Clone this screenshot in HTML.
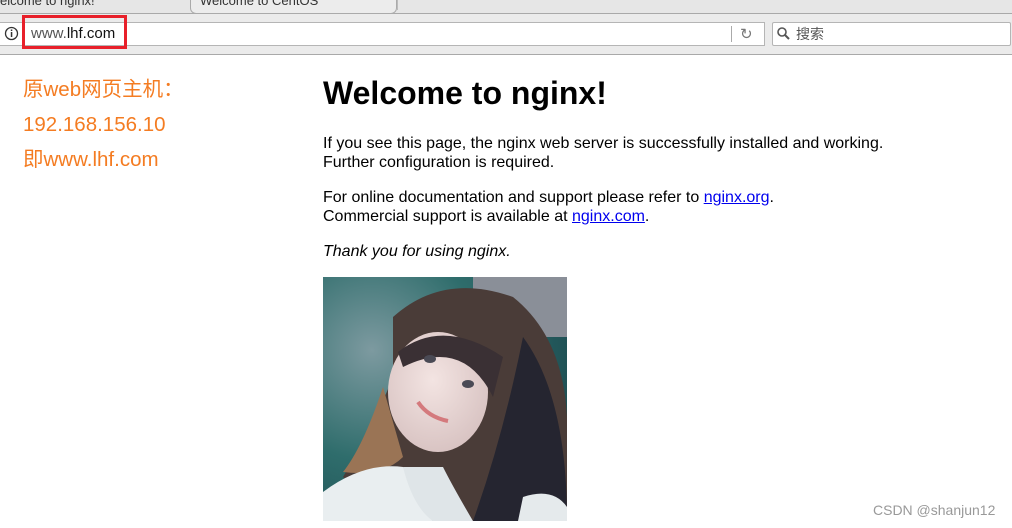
<!DOCTYPE html>
<html><head><meta charset="utf-8"><style>
body{margin:0;width:1012px;height:528px;overflow:hidden;background:#fff;font-family:"Liberation Sans",sans-serif;position:relative}
.abs{position:absolute}
.tabs{left:0;top:0;width:1012px;height:13px;background:#e6e6e6;border-bottom:1px solid #a9a9a9}
.bar{left:0;top:14px;width:1012px;height:40px;background:#ebebeb;border-bottom:1px solid #a9a9a9}
.url{left:0;top:22px;width:764px;height:22px;background:#fff;border:1px solid #b5b5b5;border-left:none}
.search{left:772px;top:22px;width:237px;height:22px;background:#fff;border:1px solid #b5b5b5;border-radius:2px}
.red{left:22px;top:15px;width:99px;height:28px;border:3px solid #e8202a}
.orange{color:#f47c22;font-size:20.5px;line-height:24px;font-family:"Liberation Sans","Noto Sans CJK SC",sans-serif;left:23px;white-space:nowrap}
p{margin:0}
.t{left:323px;font-size:16px;color:#000;line-height:19px}
a{color:#00e;text-decoration:underline}
</style></head><body>
<div class="abs tabs"><span class="abs" style="left:0;top:-7px;font-size:13px;color:#333">elcome to nginx!</span>
<div class="abs" style="left:190px;top:-10px;width:205px;height:22px;border:1px solid #aaa;border-radius:6px;background:#ececec"></div>
<span class="abs" style="left:200px;top:-7px;font-size:13px;color:#333">Welcome to CentOS</span>
<div class="abs" style="left:397px;top:0;width:1px;height:10px;background:#bbb"></div></div>
<div class="abs bar"></div>
<div class="abs url"></div>
<svg class="abs" style="left:4px;top:26px" width="15" height="15"><circle cx="7.5" cy="7.5" r="6" fill="none" stroke="#333" stroke-width="1.3"/><rect x="6.8" y="6" width="1.5" height="5" fill="#333"/><rect x="6.8" y="3.5" width="1.5" height="1.5" fill="#333"/></svg>
<span class="abs" style="left:31px;top:25px;font-size:15px;color:#555">www.<span style="color:#111">lhf.com</span></span>
<div class="abs red"></div>
<div class="abs" style="left:731px;top:26px;width:1px;height:16px;background:#aaa"></div>
<span class="abs" style="left:740px;top:25px;font-size:15px;color:#777">&#x21bb;</span>
<div class="abs search"></div>
<svg class="abs" style="left:776px;top:26px" width="14" height="14"><circle cx="6" cy="6" r="4" fill="none" stroke="#555" stroke-width="1.6"/><line x1="9" y1="9" x2="13" y2="13" stroke="#555" stroke-width="2"/></svg>
<span class="abs" style="left:796px;top:24px;font-size:14px;color:#555;font-family:'Noto Sans CJK SC',sans-serif">搜索</span>

<div class="abs orange" style="top:78px">原web网页主机：</div>
<div class="abs orange" style="top:113px">192.168.156.10</div>
<div class="abs orange" style="top:148px">即www.lhf.com</div>

<div class="abs" style="left:323px;top:75px;font-size:32px;font-weight:bold">Welcome to nginx!</div>
<p class="abs t" style="top:134px">If you see this page, the nginx web server is successfully installed and working.<br>Further configuration is required.</p>
<p class="abs t" style="top:188px">For online documentation and support please refer to <a>nginx.org</a>.<br>Commercial support is available at <a>nginx.com</a>.</p>
<p class="abs t" style="top:242px"><i>Thank you for using nginx.</i></p>

<svg class="abs" style="left:323px;top:277px" width="244" height="244">
<defs><radialGradient id="bg" cx="0.2" cy="0.3" r="0.9"><stop offset="0" stop-color="#7d9aa0"/><stop offset="0.5" stop-color="#2f6d6c"/><stop offset="1" stop-color="#1c4b50"/></radialGradient>
<radialGradient id="sk" cx="0.45" cy="0.4" r="0.6"><stop offset="0" stop-color="#f3e4e2"/><stop offset="1" stop-color="#d9c4c3"/></radialGradient></defs>
<rect width="244" height="244" fill="url(#bg)"/>
<rect x="150" y="0" width="94" height="60" fill="#8a8f98"/>
<path d="M70 40 Q120 -5 190 20 Q240 60 244 140 L244 244 L130 244 Q40 220 20 200 Q50 150 70 100 Z" fill="#4a3c38"/>
<path d="M60 110 Q40 170 20 195 Q60 200 80 180 Z" fill="#9a7455"/>
<path d="M200 60 Q244 120 244 244 L150 244 Q180 160 200 60Z" fill="#252530"/>
<ellipse cx="115" cy="115" rx="50" ry="60" fill="url(#sk)"/>
<path d="M75 75 Q120 40 180 80 L170 120 Q140 60 80 90 Z" fill="#3a3034"/>
<ellipse cx="107" cy="82" rx="6" ry="4" fill="#4a4a55"/><ellipse cx="145" cy="107" rx="6" ry="4" fill="#4a4a55"/>
<path d="M95 125 Q105 140 125 144" stroke="#d47a7d" stroke-width="4" fill="none"/>
<path d="M0 215 Q40 185 80 190 L110 244 L0 244Z" fill="#e9eef0"/>
<path d="M80 190 Q90 230 110 244 L150 244 Q130 210 120 190Z" fill="#dfe5e8"/>
<path d="M200 220 Q230 210 244 230 L244 244 L195 244Z" fill="#e5eaec"/>
</svg>
<div class="abs" style="left:873px;top:502px;font-size:14px;color:#999">CSDN @shanjun12</div>
</body></html>
